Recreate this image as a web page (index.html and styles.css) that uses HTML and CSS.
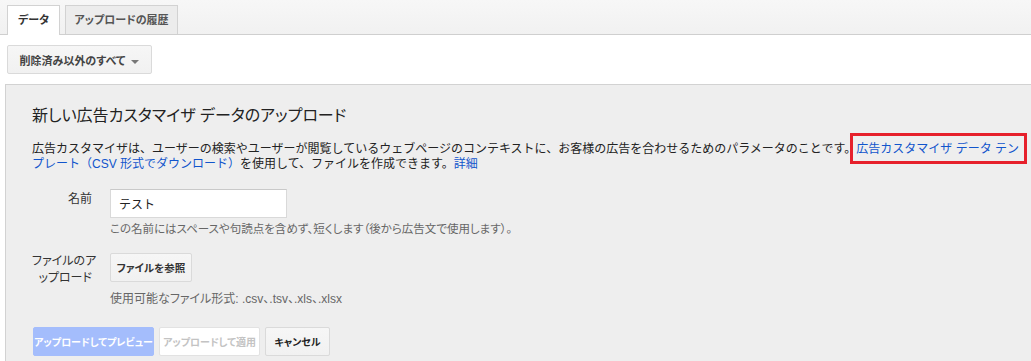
FILE: index.html
```html
<!DOCTYPE html>
<html lang="ja">
<head>
    <meta charset="UTF-8">
    <title>広告カスタマイザ データ</title>
    <link rel="stylesheet" href="styles.css">
</head>
<body>

    <div class="tabs">
        <div class="tab active">データ</div>
        <div class="tab history">アップロードの履歴</div>
    </div>

    <div class="toolbar">
        <button class="btn filter">削除済み以外のすべて <span class="caret"></span></button>
    </div>

    <div class="panel">
        <h1 class="title">新しい広告カスタマイザ データのアップロード</h1>
        <p class="desc">
            <span class="line">広告カスタマイザは、ユーザーの検索やユーザーが閲覧しているウェブページのコンテキストに、お客様の広告を合わせるためのパラメータのことです。<a href="#" class="mark">広告カスタマイザ データ テン</a></span><br>
            <span class="line"><a href="#">プレート（CSV 形式でダウンロード）</a>を使用して、ファイルを作成できます。<a href="#">詳細</a></span>
        </p>

        <div class="row">
            <label class="label name-label" for="name">名前</label>
            <div class="field">
                <input type="text" id="name" class="text-input" value="テスト">
                <div class="hint">この名前にはスペースや句読点を含めず、短くします（後から広告文で使用します）。</div>
            </div>
        </div>

        <div class="row">
            <div class="label">ファイルのア<br>ップロード</div>
            <div class="field">
                <button class="btn browse">ファイルを参照</button>
                <div class="formats">使用可能なファイル形式: .csv、.tsv、.xls、.xlsx</div>
            </div>
        </div>

        <div class="actions">
            <button class="btn primary">アップロードしてプレビュー</button>
            <button class="btn disabled">アップロードして適用</button>
            <button class="btn cancel">キャンセル</button>
        </div>
    </div>

</body>
</html>
```

FILE: styles.css
```css
body {
    margin: 0;
    font-family: "Liberation Sans", "Noto Sans CJK JP", Arial, sans-serif;
    font-size: 12px;
    color: #222;
    background: #fff;
    height: 361px;
    display: flex;
    flex-direction: column;
    overflow: hidden;
}
.tabs {
    height: 29px;
    padding: 5px 0 0 7px;
    display: flex;
    gap: 5px;
    border-bottom: 1px solid #cfcfcf;
    background: linear-gradient(#f7f7f7, #f1f1f1); /* faint grey bar */
}
.tab {
    width: 53px;
    height: 29px;
    line-height: 28px;
    text-align: center;
    font-size: 11px;
    font-weight: bold;
    font-feature-settings: "palt";
    white-space: nowrap;
    color: #555;
    background: #ececec;
    border: 1px solid #d2d2d2;
    border-bottom: none;
    box-sizing: border-box;
}
.tab.history {
    width: 113px;
}
.tab.active {
    background: #fff;
    color: #333;
    height: 30px; /* covers the bar border */
    margin-bottom: -1px;
}
.toolbar {
    padding: 10px 0 10px 7px;
}
.btn {
    height: 29px;
    padding: 0 10px;
    font-family: inherit;
    font-size: 11px;
    font-weight: bold;
    font-feature-settings: "palt";
    white-space: nowrap;
    color: #333;
    background: linear-gradient(#f6f6f6, #f1f1f1);
    border: 1px solid #dadada;
    border-radius: 2px;
    box-sizing: border-box;
}
.filter {
    width: 145px;
    color: #444;
}
.caret {
    display: inline-block;
    margin-left: 3px;
    border-left: 4px solid transparent;
    border-right: 4px solid transparent;
    border-top: 4px solid #777;
    vertical-align: middle;
}
.panel {
    flex: 1;
    margin-left: 5px;
    padding: 21px 5px 0 26px;
    background: #eeeeee;
    border-top: 1px solid #d2d2d2;
    border-left: 1px solid #d2d2d2;
}
.title {
    margin: 0 0 16px;
    font-size: 16px;
    font-weight: normal;
    font-feature-settings: "palt";
    line-height: 20px;
    color: #222;
}
.desc {
    margin: 0;
    line-height: 15px;
    color: #222;
}
.desc .line {
    white-space: nowrap;
}
.desc a {
    color: #1155cc;
    text-decoration: none;
}
.mark {
    position: relative;
}
.mark::after {
    content: "";
    position: absolute;
    top: -9px;
    bottom: -8px;
    left: -6px;
    right: -8px;
    border: 3px solid #e6202b; /* annotation box */
}
.row {
    display: flex;
    margin-top: 17px;
}
.label {
    width: 60px;
    margin-right: 18px;
    text-align: right;
    line-height: 17px;
    font-size: 12px;
    font-feature-settings: "palt";
    white-space: nowrap;
    color: #333;
}
.name-label {
    padding-top: 2px;
}
.field {
    display: flex;
    flex-direction: column;
    align-items: flex-start;
}
.text-input {
    width: 177px;
    height: 29px;
    padding: 0 8px;
    font-family: inherit;
    font-size: 12px;
    color: #222;
    background: #fff;
    border: 1px solid #d9d9d9;
    border-top-color: #c9c9c9;
    box-sizing: border-box;
}
.hint {
    margin-top: 4px;
    line-height: 14px;
    font-size: 11.5px;
    font-feature-settings: "palt";
    color: #666;
}
.browse {
    width: 82px;
    padding: 0;
    font-size: 10.5px;
}
.formats {
    margin-top: 10px;
    line-height: 15px;
    font-size: 12px;
    font-feature-settings: "palt";
    color: #666;
}
.actions {
    display: flex;
    gap: 5px;
    margin: 20px 0 0 1px;
}
.actions .btn {
    padding: 0;
    font-size: 10px;
}
.primary {
    width: 121px;
    color: #fff;
    background: #a4bdfc;
    border-color: #a4bdfc;
}
.btn.disabled {
    width: 101px;
    color: #c3c3c3;
    background: #fff;
    border-color: #e2e2e2;
}
.cancel {
    width: 65px;
    color: #222;
}
```
